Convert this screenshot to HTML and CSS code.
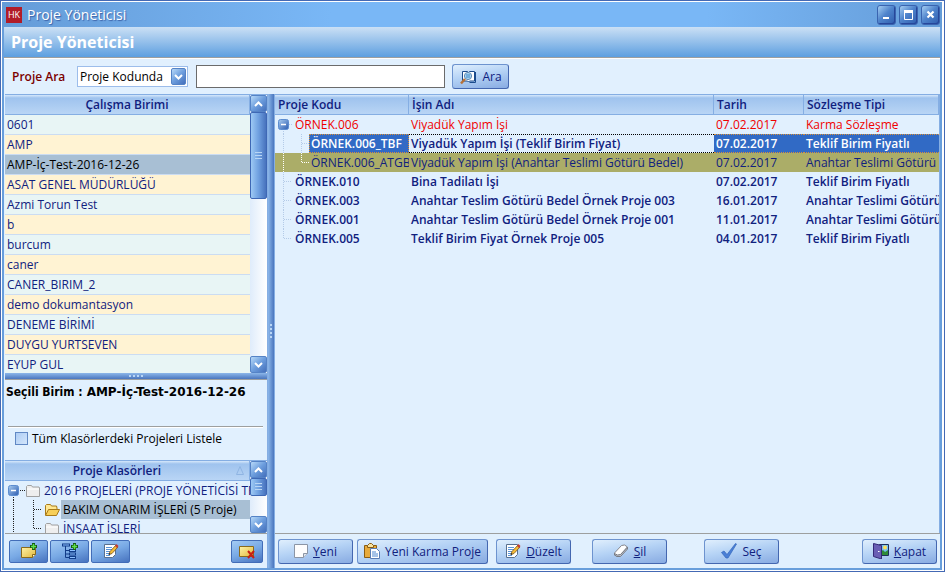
FILE: index.html
```
<!DOCTYPE html>
<html lang="tr">
<head>
    <meta charset="UTF-8">
    <meta name="viewport" content="width=device-width, initial-scale=1.0">
    <title>Proje Yöneticisi</title>
    <link rel="stylesheet" href="styles.css">
</head>
<body>
    <!-- shared icons -->
    <svg class="defs" width="0" height="0" aria-hidden="true">
        <defs>
            <linearGradient id="gNote" x1="0" y1="0" x2="1" y2="1">
                <stop offset="0" stop-color="#fff3a8"/>
                <stop offset="1" stop-color="#e0b83c"/>
            </linearGradient>
            <linearGradient id="gNode" x1="0" y1="0" x2="1" y2="1">
                <stop offset="0" stop-color="#a8ccf0"/>
                <stop offset="1" stop-color="#2c5cb0"/>
            </linearGradient>
        </defs>
        <symbol id="up" viewBox="0 0 9 6"><path d="M1 5l3.5-3.5L8 5" fill="none" stroke="#fff" stroke-width="2"/></symbol>
        <symbol id="down" viewBox="0 0 9 6"><path d="M1 1l3.5 3.5L8 1" fill="none" stroke="#fff" stroke-width="2"/></symbol>
        <symbol id="pencil" viewBox="0 0 16 16">
            <path d="M1.500 1.500h11v10l-3 3h-8z" fill="#fff" stroke="#59708f"/>
            <path d="M3 4.500h6M3 6.500h6M3 8.500h4M3 10.500h3M3 12.500h4" stroke="#5a94d8"/>
            <path d="M6 11.500l1-3 6-6.500 2 2-6 6.500z" fill="#f5bd38" stroke="#77521c" stroke-width=".8"/>
            <path d="M12 3l1.500-2 2 2-1.500 2z" fill="#c43c32"/>
            <path d="M5.500 12l.8-2 1.200 1.200z" fill="#222"/>
        </symbol>
        <symbol id="folder" viewBox="0 0 16 14">
            <path d="M1.500 12.500v-10l1-1h4l1 1.500h6.500l.5 1v8.500z" fill="#eeeeee" stroke="#a0a0a0"/>
            <path d="M2 5h12" stroke="#fff"/>
        </symbol>
        <symbol id="folder-open" viewBox="0 0 16 14">
            <path d="M1.500 12v-9.500l1-1h4l1 1.500h5l.5 2v2" fill="#ffe792" stroke="#a87a18"/>
            <path d="M1.500 12.500l3-6h11l-3 6z" fill="#f7cf58" stroke="#a87a18"/>
        </symbol>
        <symbol id="minus" viewBox="0 0 11 11">
            <rect x=".5" y=".5" width="10" height="10" rx="2" fill="url(#gNode)" stroke="#5c8dd0"/>
            <path d="M3 5.500h5" stroke="#fff" stroke-width="1.500"/>
        </symbol>
        <symbol id="branch" viewBox="0 0 18 19"><path d="M8.500 0v19M9 9.500h8" fill="none" stroke-dasharray="1 1"/></symbol>
        <symbol id="branch-end" viewBox="0 0 18 19"><path d="M8.500 0v10M9 9.500h8" fill="none" stroke-dasharray="1 1"/></symbol>
        <symbol id="trunk" viewBox="0 0 18 19"><path d="M8.500 0v19" fill="none" stroke-dasharray="1 1"/></symbol>
    </svg>

    <div class="window">
        <div class="titlebar">
            <span class="logo">HK</span>
            <span class="caption">Proje Yöneticisi</span>
            <button class="win-btn" aria-label="Küçült"><svg width="12" height="12"><path d="M2 9h6" stroke="#fff" stroke-width="2"/></svg></button>
            <button class="win-btn" aria-label="Ekranı kapla"><svg width="12" height="12"><path d="M1.500 2v8.500h8V2" fill="none" stroke="#fff"/><path d="M1 2.500h9" stroke="#fff" stroke-width="3"/></svg></button>
            <button class="win-btn" aria-label="Kapat"><svg width="12" height="12"><path d="M2.500 2.500l6 6m0-6l-6 6" stroke="#fff" stroke-width="2.200"/></svg></button>
        </div>

        <div class="content">
            <h1>Proje Yöneticisi</h1>

            <form class="search">
                <label for="field">Proje Ara</label>
                <span class="combo">
                    <select id="field">
                        <option>Proje Kodunda</option>
                        <option>İşin Adında</option>
                    </select>
                    <span class="combo-btn"><svg width="9" height="6"><use href="#down"/></svg></span>
                </span>
                <input type="text" id="query" aria-label="Aranan">
                <button type="button" class="btn find">
                    <svg width="18" height="16" viewBox="0 0 18 16">
                        <path d="M3.500 2.500h5l1 1 1-1h5v9.500h-5l-1 1-1-1h-5z" fill="#fff" stroke="#1b4b8c"/>
                        <path d="M16.500 3v10.500h-6" fill="none" stroke="#1b4b8c"/>
                        <circle cx="9" cy="7" r="3.600" fill="#a9d7f5" stroke="#6087b0"/>
                        <path d="M7 6h4M7 8h4" stroke="#3c85c5"/>
                        <path d="M6 10l-4 4.500" stroke="#b5713a" stroke-width="2.500"/>
                    </svg>
                    Ara
                </button>
            </form>

            <div class="main">
                <div class="left">
                    <div class="units">
                        <div class="grid-area">
                            <table class="unit-table">
                                <thead><tr><th>Çalışma Birimi</th></tr></thead>
                                <tbody>
                                    <tr><td>0601</td></tr>
                                    <tr><td>AMP</td></tr>
                                    <tr class="selected"><td>AMP-İç-Test-2016-12-26</td></tr>
                                    <tr><td>ASAT GENEL MÜDÜRLÜĞÜ</td></tr>
                                    <tr><td>Azmi Torun Test</td></tr>
                                    <tr><td>b</td></tr>
                                    <tr><td>burcum</td></tr>
                                    <tr><td>caner</td></tr>
                                    <tr><td>CANER_BIRIM_2</td></tr>
                                    <tr><td>demo dokumantasyon</td></tr>
                                    <tr><td>DENEME BİRİMİ</td></tr>
                                    <tr><td>DUYGU YURTSEVEN</td></tr>
                                    <tr><td>EYUP GUL</td></tr>
                                </tbody>
                            </table>
                        </div>
                        <div class="scroll">
                            <button class="scroll-btn" aria-label="Yukarı"><svg width="9" height="6"><use href="#up"/></svg></button>
                            <div class="thumb"><svg width="7" height="8"><path d="M0 .5h7M0 3.500h7M0 6.500h7" stroke="#b9d6f5"/></svg></div>
                            <button class="scroll-btn last" aria-label="Aşağı"><svg width="9" height="6"><use href="#down"/></svg></button>
                        </div>
                    </div>

                    <div class="split-h"><svg width="14" height="2"><path d="M0 1h14" stroke="#b9d6f5" stroke-width="2" stroke-dasharray="2 2"/></svg></div>

                    <div class="current">
                        <p><span>Seçili Birim :</span> <span class="unit-name">AMP-İç-Test-2016-12-26</span></p>
                        <hr>
                        <label><input type="checkbox"> Tüm Klasörlerdeki Projeleri Listele</label>
                    </div>

                    <div class="folders">
                        <div class="grid-area">
                            <div class="folder-head">Proje Klasörleri
                                <svg width="8" height="9"><path d="M.5 8.500L4 .5l3.500 8z" fill="none" stroke="#8fb4e2"/></svg>
                            </div>
                            <ul class="tree">
                                <li>
                                    <svg class="lines" width="20" height="19"><path d="M8.500 14v5M15 9.500h5" stroke-dasharray="1 1"/><use href="#minus" x="3" y="4" width="11" height="11"/></svg>
                                    <svg width="16" height="14"><use href="#folder"/></svg>
                                    <span>2016 PROJELERİ (PROJE YÖNETİCİSİ TEST)</span>
                                </li>
                                <li>
                                    <svg class="lines" width="20" height="19"><use href="#trunk" width="18" height="19"/></svg>
                                    <svg class="lines" width="19" height="19"><use href="#branch" width="18" height="19"/></svg>
                                    <svg width="16" height="14"><use href="#folder-open"/></svg>
                                    <span class="picked">BAKIM ONARIM İŞLERİ (5 Proje)</span>
                                </li>
                                <li>
                                    <svg class="lines" width="20" height="19"><use href="#trunk" width="18" height="19"/></svg>
                                    <svg class="lines" width="19" height="19"><use href="#branch-end" width="18" height="19"/></svg>
                                    <svg width="16" height="14"><use href="#folder"/></svg>
                                    <span>İNŞAAT İŞLERİ</span>
                                </li>
                            </ul>
                        </div>
                        <div class="scroll">
                            <button class="scroll-btn" aria-label="Yukarı"><svg width="9" height="6"><use href="#up"/></svg></button>
                            <div class="thumb small"><svg width="7" height="8"><path d="M0 .5h7M0 3.500h7M0 6.500h7" stroke="#b9d6f5"/></svg></div>
                            <button class="scroll-btn last" aria-label="Aşağı"><svg width="9" height="6"><use href="#down"/></svg></button>
                        </div>
                    </div>

                    <div class="left-actions">
                        <button class="tool" aria-label="Klasör ekle">
                            <svg width="18" height="16" viewBox="0 0 18 16">
                                <path d="M1.500 4.500h14v7l-3 3h-11z" fill="url(#gNote)" stroke="#8a6a1c"/>
                                <path d="M12.500 14.500v-3h3" fill="#fff8cc" stroke="#8a6a1c"/>
                                <path d="M13.500 0v7M10 3.500h7" stroke="#145c14" stroke-width="3"/>
                                <path d="M13.500 1v5M11 3.500h5" stroke="#5fe04a" stroke-width="1.500"/>
                            </svg>
                        </button>
                        <button class="tool" aria-label="Alt klasör ekle">
                            <svg width="18" height="16" viewBox="0 0 18 16">
                                <path d="M4.500 3v11.500M4.500 7.500h4M4.500 11h4M4.500 14.500h4" fill="none" stroke="#123c88"/>
                                <path d="M1 2h8M8 7.500h7M8 11h7M8 14.500h7" stroke="#123c88" stroke-width="3"/>
                                <path d="M2 2h6M9 7.500h5M9 11h5M9 14.500h5" stroke="#8cc0ff"/>
                                <path d="M13.500 0v7M10 3.500h7" stroke="#145c14" stroke-width="3"/>
                                <path d="M13.500 1v5M11 3.500h5" stroke="#5fe04a" stroke-width="1.500"/>
                            </svg>
                        </button>
                        <button class="tool" aria-label="Klasör düzelt"><svg width="16" height="16"><use href="#pencil"/></svg></button>
                        <button class="tool remove" aria-label="Klasör sil">
                            <svg width="18" height="16" viewBox="0 0 18 16">
                                <path d="M1.500 3.500h14v10h-14z" fill="url(#gNote)" stroke="#8a6a1c"/>
                                <path d="M10 8l6 7m0-7l-6 7" stroke="#c81e14" stroke-width="2"/>
                            </svg>
                        </button>
                    </div>
                </div>

                <div class="split-v"><svg width="2" height="14"><path d="M1 0v14" stroke="#b9d6f5" stroke-width="2" stroke-dasharray="2 2"/></svg></div>

                <div class="right">
                    <div class="projects">
                        <table class="project-table">
                            <colgroup><col class="c-code"><col><col class="c-date"><col class="c-type"></colgroup>
                            <thead>
                                <tr><th>Proje Kodu</th><th>İşin Adı</th><th>Tarih</th><th>Sözleşme Tipi</th></tr>
                            </thead>
                            <tbody>
                                <tr class="mixed">
                                    <td><div class="node"><svg class="lines" width="18" height="19"><path d="M8.500 14v5M14 9.500h4" stroke-dasharray="1 1"/><use href="#minus" x="3" y="4" width="11" height="11"/></svg><span>ÖRNEK.006</span></div></td>
                                    <td>Viyadük Yapım İşi</td><td>07.02.2017</td><td>Karma Sözleşme</td>
                                </tr>
                                <tr class="active">
                                    <td><div class="node"><svg class="lines" width="18" height="19"><use href="#trunk"/></svg><svg class="lines" width="16" height="19"><use href="#branch" width="18" height="19"/></svg><span>ÖRNEK.006_TBF</span></div></td>
                                    <td>Viyadük Yapım İşi (Teklif Birim Fiyat)</td><td>07.02.2017</td><td>Teklif Birim Fiyatlı</td>
                                </tr>
                                <tr class="olive">
                                    <td><div class="node"><svg class="lines" width="18" height="19"><use href="#trunk"/></svg><svg class="lines" width="16" height="19"><use href="#branch-end" width="18" height="19"/></svg><span>ÖRNEK.006_ATGB</span></div></td>
                                    <td>Viyadük Yapım İşi (Anahtar Teslimi Götürü Bedel)</td><td>07.02.2017</td><td>Anahtar Teslimi Götürü B</td>
                                </tr>
                                <tr>
                                    <td><div class="node"><svg class="lines" width="18" height="19"><use href="#branch"/></svg><span>ÖRNEK.010</span></div></td>
                                    <td>Bina Tadilatı İşi</td><td>07.02.2017</td><td>Teklif Birim Fiyatlı</td>
                                </tr>
                                <tr>
                                    <td><div class="node"><svg class="lines" width="18" height="19"><use href="#branch"/></svg><span>ÖRNEK.003</span></div></td>
                                    <td>Anahtar Teslim Götürü Bedel Örnek Proje 003</td><td>16.01.2017</td><td>Anahtar Teslimi Götürü</td>
                                </tr>
                                <tr>
                                    <td><div class="node"><svg class="lines" width="18" height="19"><use href="#branch"/></svg><span>ÖRNEK.001</span></div></td>
                                    <td>Anahtar Teslim Götürü Bedel Örnek Proje 001</td><td>11.01.2017</td><td>Anahtar Teslimi Götürü</td>
                                </tr>
                                <tr>
                                    <td><div class="node"><svg class="lines" width="18" height="19"><use href="#branch-end"/></svg><span>ÖRNEK.005</span></div></td>
                                    <td>Teklif Birim Fiyat Örnek Proje 005</td><td>04.01.2017</td><td>Teklif Birim Fiyatlı</td>
                                </tr>
                            </tbody>
                        </table>
                    </div>

                    <div class="actions">
                        <button class="btn">
                            <svg width="14" height="14" viewBox="0 0 14 14"><path d="M.5 .5h13v9l-4 4h-9z" fill="#fdfdfd" stroke="#8b95a5"/><path d="M9.500 13.500v-4h4" fill="#dde3ec" stroke="#8b95a5"/></svg>
                            <span><u>Y</u>eni</span>
                        </button>
                        <button class="btn wide">
                            <svg width="16" height="16" viewBox="0 0 16 16">
                                <path d="M.5 2.500h12v12h-12z" fill="#e8ab3c" stroke="#8a5d14"/>
                                <path d="M3.500 4.500v-2l2-2h2l2 2v2z" fill="#f8e3a0" stroke="#8a5d14"/>
                                <path d="M6.500 5.500h6l3 3v7h-9z" fill="#fff" stroke="#5a7db4"/>
                                <path d="M8 9h4M8 11h6M8 13h6" stroke="#4d87d0"/>
                            </svg>
                            <span>Yeni Karma Proje</span>
                        </button>
                        <button class="btn edit"><svg width="16" height="16"><use href="#pencil"/></svg><span><u>D</u>üzelt</span></button>
                        <button class="btn delete">
                            <svg width="16" height="14" viewBox="0 0 16 14"><path d="M1.500 9l7-7.500 3-.5 3 2-7 8-3 1.500-3-1.500z" fill="#fff" stroke="#85868c"/><path d="M1.500 9.500l3 1.500 3-.5 7-7.500v2l-7 7.500H4l-2.500-1.500z" fill="#bfc2ca" stroke="#777b84"/></svg>
                            <span><u>S</u>il</span>
                        </button>
                        <button class="btn choose">
                            <svg width="16" height="16" viewBox="0 0 16 16"><path d="M.5 9.500l2.500-1.500 3 3.500L14.500.5l1 .5L7 15H5z" fill="#4a7fd6" stroke="#3567bb" stroke-width=".7"/></svg>
                            <span>Seç</span>
                        </button>
                        <button class="btn close">
                            <svg width="16" height="16" viewBox="0 0 16 16">
                                <path d="M6.500 1.500h9v11h-9z" fill="#75bff3" stroke="#1c2f5e"/>
                                <path d="M7 12V9l3-2 2 2 3-2v5z" fill="#2f8b38"/>
                                <circle cx="12" cy="4.500" r="2" fill="#ffe05a"/>
                                <path d="M.5 .5l8 2v13.500l-8-2.500z" fill="#6a5fb5" stroke="#352a78"/>
                                <path d="M5 8.500h1.500" stroke="#fff"/>
                            </svg>
                            <span><u>K</u>apat</span>
                        </button>
                    </div>
                </div>
            </div>
        </div>
    </div>
</body>
</html>
```
FILE: styles.css
```
* {
    box-sizing: border-box;
}

body {
    margin: 0;
    font-family: "Open Sans", "Noto Sans", sans-serif;
    font-size: 12px;
    color: #10217e;
}

.defs {
    position: absolute;
}

svg {
    flex: none;
    display: block;
}

button,
select,
input {
    font: inherit;
    color: inherit;
    margin: 0;
}

button {
    display: flex;
    align-items: center;
    justify-content: center;
    padding: 0;
    white-space: nowrap;
}

.window {
    display: flex;
    flex-direction: column;
    height: 100vh;
    padding: 1px 2px 1px 1px;
    border: 1px solid #4469b4;
    background-color: #fff;
    overflow: hidden;
}

/* title bar */
.titlebar {
    display: flex;
    align-items: center;
    gap: 3px;
    flex: none;
    height: 25px;
    padding: 0 2px 0 4px;
    background: linear-gradient(to right, #659cd8, #79b7f6 35%, #79b7f6 75%, #659cd8);
}

.logo {
    width: 16px;
    height: 16px;
    background-color: #b11c28;
    color: #fff;
    font-size: 9px;
    line-height: 16px;
    text-align: center;
}

.caption {
    flex: 1;
    margin-left: 2px;
    font-size: 14px;
    line-height: 22px;
    color: #fff;
    text-shadow: 1px 1px 1px #3c62a8;
}

.win-btn {
    width: 19px;
    height: 20px;
    border: 1px solid #3a64b0;
    border-radius: 3px;
    background: linear-gradient(135deg, #a4cdf2, #4f84cc 45%, #2f5dae);
    box-shadow: inset -1px -1px 0 #27479a;
}

.content {
    display: flex;
    flex-direction: column;
    flex: 1;
    min-height: 0;
    border: solid #689edb;
    border-width: 0 2px 2px;
    background-color: #e1f0fe;
}

h1 {
    flex: none;
    height: 31px;
    margin: 0;
    padding-left: 7px;
    border-bottom: 1px solid #9d9f9f;
    background: linear-gradient(#cbe0f5, #5d9fe0);
    color: #fff;
    font-size: 16px;
    line-height: 30px;
}

/* search row */
.search {
    display: flex;
    align-items: center;
    flex: none;
    height: 36px;
    padding-left: 8px;
    border-top: 1px solid #fff;
}

.search label {
    width: 65px;
    color: #7b0000;
    font-weight: 600;
}

.combo {
    display: flex;
    align-items: center;
    width: 111px;
    height: 21px;
    margin-right: 8px;
    padding-right: 1px;
    border: 1px solid #9cbdeb;
    background-color: #fff;
}

.combo select {
    flex: 1;
    min-width: 0;
    height: 19px;
    padding: 0 2px;
    border: 0;
    background: none;
    appearance: none;
    color: #000;
}

.combo-btn,
.scroll-btn {
    display: flex;
    align-items: center;
    justify-content: center;
    flex: none;
    width: 17px;
    height: 17px;
    border: 1px solid #5583c6;
    border-radius: 2px;
    background: linear-gradient(135deg, #b7d9f8, #6c9ddd 50%, #446fbb);
}

.combo-btn {
    width: 15px;
    pointer-events: none;
}

.search input {
    width: 249px;
    height: 23px;
    padding: 0 4px;
    border: 1px solid #6b6b6b;
    background-color: #fff;
}

.btn {
    gap: 5px;
    width: 75px;
    height: 25px;
    border: 1px solid #6d93cf;
    border-right-color: #4467b0;
    border-bottom-color: #4467b0;
    border-radius: 3px;
    background: linear-gradient(170deg, #e0effd, #b4d2f5 45%, #88abe2);
}

.find {
    width: 57px;
    margin-left: 7px;
}

.main {
    display: flex;
    flex: 1;
    min-height: 0;
    padding-left: 1px;
}

/* left side */
.left {
    display: flex;
    flex-direction: column;
    flex: none;
    width: 262px;
}

.units,
.folders {
    display: flex;
}

.units {
    flex: 1;
    min-height: 0;
    border-top: 1px solid #85aee3;
}

.grid-area {
    flex: 1;
    min-width: 0;
    overflow: hidden;
}

table {
    width: 100%;
    border-collapse: separate;
    border-spacing: 0;
    table-layout: fixed;
}

th,
.folder-head {
    height: 20px;
    padding: 0 3px;
    border: solid #85aee3;
    border-width: 0 1px 1px 0;
    background: linear-gradient(#d6e8fb, #9fc3ee 3px, #b9d5f5);
    font-weight: 600;
    line-height: 18px;
}

.unit-table th {
    text-align: center;
}

td {
    overflow: hidden;
    white-space: nowrap;
}

.unit-table td {
    height: 20px;
    padding: 0 2px;
    border-bottom: 1px solid #cbdcf2;
    background-color: #e8f5f5;
    line-height: 19px;
}

.unit-table tr:nth-child(even) td {
    background-color: #fff3d3;
}

.unit-table tr.selected td {
    background-color: #a8bfd4;
    color: #000;
}

.scroll {
    display: flex;
    flex-direction: column;
    flex: none;
    width: 17px;
    background: linear-gradient(to right, #dfecfb, #fff);
}

.scroll .last {
    margin-top: auto;
}

.thumb {
    display: flex;
    align-items: center;
    justify-content: center;
    height: 87px;
    border: 1px solid #3e68b5;
    border-radius: 2px;
    background: linear-gradient(to right, #9dc9f4, #6fa0e0 50%, #4772bd);
}

.thumb.small {
    height: 18px;
}

.split-h,
.split-v {
    display: flex;
    align-items: center;
    justify-content: center;
    flex: none;
}

.split-h {
    height: 7px;
    border-bottom: 1px solid #9d9f9f;
    background: linear-gradient(#8cb7ea, #4a76be);
}

.split-v {
    width: 8px;
    border: solid #85aee3;
    border-width: 0 1px;
    background: linear-gradient(to right, #8cb7ea, #4a76be);
}

.current {
    flex: none;
    height: 80px;
    padding: 0 2px 0 1px;
    color: #000;
}

.current p {
    display: flex;
    gap: 4px;
    height: 46px;
    margin: 0;
    font-family: "DejaVu Sans Condensed", sans-serif;
    font-weight: bold;
    line-height: 24px;
    white-space: nowrap;
}

.current .unit-name {
    font-family: "DejaVu Sans", sans-serif;
}

.current hr {
    height: 2px;
    margin: 0 2px 2px;
    border: 0;
    border-top: 1px solid #9d9f9f;
    background-color: #fff;
}

.current label {
    display: flex;
    align-items: center;
    gap: 4px;
    padding-left: 9px;
    white-space: nowrap;
}

.current input {
    width: 13px;
    height: 13px;
    appearance: none;
    border: 1px solid #6088c4;
    background: linear-gradient(135deg, #aecdf4, #d3e6fb);
}

/* folder tree */
.folders {
    flex: none;
    height: 73px;
    border-top: 1px solid #85aee3;
}

.folder-head {
    display: flex;
    align-items: center;
    justify-content: flex-end;
    gap: 75px;
    padding-right: 5px;
}

.tree {
    margin: 0;
    padding: 0;
    list-style: none;
}

.tree li {
    display: flex;
    align-items: center;
    height: 19px;
    white-space: nowrap;
}

.tree span {
    flex: 1;
    margin-left: 1px;
    padding-left: 2px;
    line-height: 19px;
}

.tree .picked {
    background-color: #a8bfd4;
    color: #000;
}

.tree .lines {
    stroke: #222;
}

.left-actions {
    display: flex;
    align-items: center;
    gap: 2px;
    flex: none;
    height: 35px;
    padding: 0 4px;
    border-top: 1px solid #9d9f9f;
}

.tool {
    width: 39px;
    height: 23px;
    border: 1px solid #426db8;
    border-radius: 2px;
    background: linear-gradient(160deg, #a3cbf4, #78a9e5 50%, #4773bf);
}

.remove {
    width: 32px;
    margin-left: auto;
}

/* right side */
.right {
    display: flex;
    flex-direction: column;
    flex: 1;
    min-width: 0;
}

.projects {
    flex: 1;
    min-height: 0;
    border: solid #85aee3;
    border-width: 1px 1px 0 0;
    overflow: hidden;
}

.c-code {
    width: 134px;
}

.c-date {
    width: 90px;
}

.c-type {
    width: 135px;
}

.project-table th {
    text-align: left;
}

.project-table td {
    height: 19px;
    padding: 0 0 0 2px;
    font-weight: 600;
    line-height: 17px;
}

.project-table td:first-child {
    padding: 0;
}

.node {
    display: flex;
    align-items: center;
    height: 19px;
}

.node span {
    flex: 1;
    padding-left: 2px;
    line-height: 19px;
}

.node .lines {
    stroke: #b4cbe8;
}

.project-table .mixed td {
    color: #f00000;
    font-weight: normal;
}

.project-table .active td:nth-child(2) {
    border: dotted #000;
    border-width: 1px 0;
}

.active td:nth-child(n+3),
.active .node span {
    border: 1px dotted #d99038;
    border-width: 1px 0;
    background-color: #316ac5;
    color: #fff;
}

.active .node span {
    border-width: 1px;
    padding-left: 1px;
    line-height: 17px;
}

.project-table .olive td {
    background-color: #abad68;
    font-weight: normal;
}

.olive .lines {
    stroke: #fff;
}

.actions {
    display: flex;
    align-items: center;
    flex: none;
    height: 35px;
    padding: 0 3px;
    border-top: 1px solid #9d9f9f;
}

.wide {
    width: 131px;
    margin-left: 4px;
}

.edit {
    margin-left: 8px;
}

.delete {
    margin-left: 21px;
}

.choose {
    margin-left: 37px;
}

.close {
    margin-left: auto;
}
```
